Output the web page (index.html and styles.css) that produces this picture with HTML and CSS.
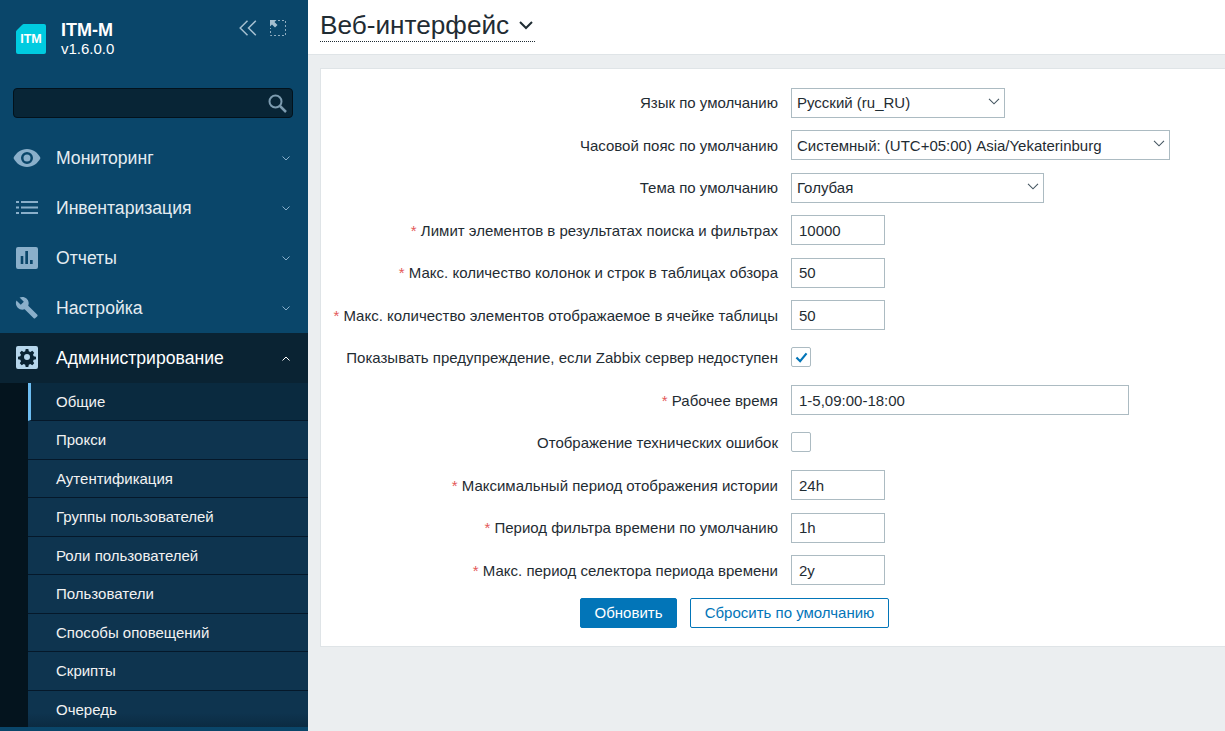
FILE: index.html
```html
<!DOCTYPE html>
<html lang="ru">
<head>
    <meta charset="UTF-8">
    <meta name="viewport" content="width=device-width, initial-scale=1.0">
    <title>Веб-интерфейс</title>
    <link rel="stylesheet" href="styles.css">
</head>
<body>
    <aside class="sidebar">
        <div class="brand">
            <div class="logo">ITM</div>
            <div class="brand-text">
                <div class="brand-name">ITM-M</div>
                <div class="brand-version">v1.6.0.0</div>
            </div>
            <div class="brand-tools">
                <svg width="18" height="16" viewBox="0 0 18 16" fill="none" stroke="#a5bfd0" stroke-width="1.5"><path d="M8.500 .8 1.200 8l7.300 7.200M16.800 .8 9.500 8l7.300 7.200"/></svg>
                <svg width="16" height="16" viewBox="0 0 16 16" fill="none"><path d="M8 .5h7.500v15H.5V8" stroke="#8fadc0" stroke-dasharray="2 2"/><path d="M0 0h6.500L4.500 2l3 3-2.500 2.500-3-3L0 6.500z" fill="#a5bfd0"/></svg>
            </div>
        </div>
        <div class="search">
            <input type="text" class="search-input">
            <svg class="search-icon" width="19" height="19" viewBox="0 0 19 19" fill="none" stroke="#7d9cb0" stroke-width="2"><circle cx="7.500" cy="7.500" r="6"/><path d="m12 12 6 6" stroke-width="2.500"/></svg>
        </div>
        <nav class="menu">
            <a class="menu-item">
                <svg class="menu-icon" viewBox="0 0 28 24"><path fill-rule="evenodd" d="M14 3C8 3 3 6.800 .5 12 3 17.200 8 21 14 21s11-3.800 13.500-9C25 6.800 20 3 14 3zm0 15a6 6 0 1 1 0-12 6 6 0 0 1 0 12zm0-9.500a3.500 3.500 0 1 0 0 7 3.500 3.500 0 0 0 0-7z"/></svg>
                <span>Мониторинг</span>
                <svg class="menu-arrow" viewBox="0 0 8 5"><path d="M.5.500 4 4 7.500.500"/></svg>
            </a>
            <a class="menu-item">
                <svg class="menu-icon" viewBox="0 0 28 24"><path d="M3 5h3v2H3zM3 10.500h3v2H3zM3 16h3v2H3zM8 5h17v2H8zM8 10.500h17v2H8zM8 16h17v2H8z"/></svg>
                <span>Инвентаризация</span>
                <svg class="menu-arrow" viewBox="0 0 8 5"><path d="M.5.500 4 4 7.500.500"/></svg>
            </a>
            <a class="menu-item">
                <svg class="menu-icon" viewBox="0 0 28 24"><path fill-rule="evenodd" d="M5 1h18a2 2 0 0 1 2 2v18a2 2 0 0 1-2 2H5a2 2 0 0 1-2-2V3a2 2 0 0 1 2-2zm2.700 9v8h2.600v-8zm4.600-5v13H15V5zm4.700 9v4h2.700v-4z"/></svg>
                <span>Отчеты</span>
                <svg class="menu-arrow" viewBox="0 0 8 5"><path d="M.5.500 4 4 7.500.500"/></svg>
            </a>
            <a class="menu-item">
                <svg class="menu-icon" viewBox="0 0 28 24"><path d="M23.200 19.300 13.300 9.400c1-2.500.5-5.400-1.600-7.500C9.600-.2 6.400-.6 3.900.5l4.600 4.600-3.300 3.300L.5 3.900c-1.200 2.500-.7 5.700 1.400 7.800 2.100 2.100 5 2.600 7.500 1.600l9.900 9.900c.4.400 1.100.4 1.500 0l2.400-2.400c.4-.4.400-1.100 0-1.500z" transform="translate(3 1) scale(.92)"/></svg>
                <span>Настройка</span>
                <svg class="menu-arrow" viewBox="0 0 8 5"><path d="M.5.500 4 4 7.500.500"/></svg>
            </a>
            <a class="menu-item menu-item-open">
                <svg class="menu-icon" viewBox="0 0 28 24"><path fill-rule="evenodd" d="M5 0h18a2 2 0 0 1 2 2v19a2 2 0 0 1-2 2H5a2 2 0 0 1-2-2V2a2 2 0 0 1 2-2zm7.700 3-.5 2.300-1.500.7-2-1.200-1.900 1.900 1.200 2-.7 1.500-2.300.5v2.600l2.300.5.7 1.500-1.200 2 1.900 1.900 2-1.200 1.500.7.500 2.300h2.600l.5-2.300 1.500-.7 2 1.200 1.900-1.900-1.200-2 .7-1.500 2.300-.5v-2.600l-2.300-.5-.7-1.500 1.200-2-1.900-1.900-2 1.200-1.500-.7-.5-2.300zM14 8a3 3 0 1 1 0 6 3 3 0 0 1 0-6z"/></svg>
                <span>Администрирование</span>
                <svg class="menu-arrow" viewBox="0 0 8 5"><path d="M.5 4.500 4 1l3.500 3.500"/></svg>
            </a>
            <div class="submenu">
                <a class="submenu-item active">Общие</a>
                <a class="submenu-item">Прокси</a>
                <a class="submenu-item">Аутентификация</a>
                <a class="submenu-item">Группы пользователей</a>
                <a class="submenu-item">Роли пользователей</a>
                <a class="submenu-item">Пользователи</a>
                <a class="submenu-item">Способы оповещений</a>
                <a class="submenu-item">Скрипты</a>
                <a class="submenu-item">Очередь</a>
            </div>
        </nav>
    </aside>

    <main class="content">
        <header class="page-header">
            <h1 class="page-title">Веб-интерфейс
                <svg width="14" height="9" viewBox="0 0 14 9" fill="none" stroke="#1f2c33" stroke-width="2"><path d="m1 1 6 6 6-6"/></svg>
            </h1>
        </header>
        <div class="card">
            <form class="settings-form">
                <label>Язык по умолчанию</label>
                <select class="field w-214"><option>Русский (ru_RU)</option></select>

                <label>Часовой пояс по умолчанию</label>
                <select class="field w-379"><option>Системный: (UTC+05:00) Asia/Yekaterinburg</option></select>

                <label>Тема по умолчанию</label>
                <select class="field w-253"><option>Голубая</option></select>

                <label><i>*</i> Лимит элементов в результатах поиска и фильтрах</label>
                <input class="field w-94" type="text" value="10000">

                <label><i>*</i> Макс. количество колонок и строк в таблицах обзора</label>
                <input class="field w-94" type="text" value="50">

                <label><i>*</i> Макс. количество элементов отображаемое в ячейке таблицы</label>
                <input class="field w-94" type="text" value="50">

                <label>Показывать предупреждение, если Zabbix сервер недоступен</label>
                <span class="check">
                    <svg width="13" height="11" viewBox="0 0 14 12" fill="none" stroke="#0275b8" stroke-width="2.400"><path d="m1.500 6 4 4 7-8.500"/></svg>
                </span>

                <label><i>*</i> Рабочее время</label>
                <input class="field w-338" type="text" value="1-5,09:00-18:00">

                <label>Отображение технических ошибок</label>
                <span class="check"></span>

                <label><i>*</i> Максимальный период отображения истории</label>
                <input class="field w-94" type="text" value="24h">

                <label><i>*</i> Период фильтра времени по умолчанию</label>
                <input class="field w-94" type="text" value="1h">

                <label><i>*</i> Макс. период селектора периода времени</label>
                <input class="field w-94" type="text" value="2y">

                <div class="form-buttons">
                    <button type="button" class="btn-main">Обновить</button>
                    <button type="button" class="btn-alt">Сбросить по умолчанию</button>
                </div>
            </form>
        </div>
    </main>
</body>
</html>
```

FILE: styles.css
```css
* {
    box-sizing: border-box;
}
html, body {
    height: 100%;
}
body {
    font-family: "Liberation Sans", Arial, sans-serif;
    font-size: 15px;
    color: #1f2c33;
    background-color: #ebeef0;
    display: flex;
    margin: 0;
    overflow: hidden;
}

/* sidebar */
.sidebar {
    width: 308px;
    height: 731px;
    flex-shrink: 0;
    background-color: #0a466a;
    color: #f2f2f2;
    overflow: hidden;
}
.brand {
    display: flex;
    height: 88px;
    padding: 20px 22px 0 16px;
}
.logo {
    width: 30px;
    height: 30px;
    margin-top: 4px;
    background-color: #00cbe0;
    border-radius: 8px 2px 2px 2px;
    clip-path: polygon(7px 0, 100% 0, 100% 100%, 0 100%, 0 7px);
    color: #fff;
    font-size: 12.500px;
    font-weight: bold;
    line-height: 31px;
    text-align: center;
}
.brand-text {
    margin-left: 15px;
    color: #fff;
}
.brand-name {
    font-size: 18px;
    font-weight: bold;
    line-height: 20px;
}
.brand-version {
    font-size: 15px;
    line-height: 18px;
}
.brand-tools {
    margin-left: auto;
    display: flex;
    gap: 13px;
}
.search {
    position: relative;
    margin: 0 15px 0 13px;
}
.search-input {
    display: block;
    width: 100%;
    height: 30px;
    background-color: #082536;
    border: 1px solid #02121c;
    border-radius: 4px;
}
.search-icon {
    position: absolute;
    top: 6px;
    right: 6px;
}
.menu {
    margin-top: 15px;
}
.menu-item {
    display: flex;
    align-items: center;
    height: 50px;
    padding: 0 18px 0 13px;
    font-size: 17.600px;
    color: #e4ecf1;
}
.menu-item span {
    margin-left: 15px;
}
.menu-icon {
    width: 28px;
    height: 24px;
    flex-shrink: 0;
    fill: #8aafca;
}
.menu-arrow {
    width: 8px;
    height: 5px;
    margin-left: auto;
    fill: none;
    stroke: #8aafca;
    stroke-width: 1;
}
.menu-item-open {
    background-color: #0a2333;
    color: #fff;
}
.menu-item-open .menu-icon {
    fill: #b6d6ec;
}
.menu-item-open .menu-arrow {
    stroke: #fff;
}
.submenu {
    height: 344px;
    border-left: 28px solid #04141e;
    background: linear-gradient(#0e344f calc(100% - 14px), #0b2b42);
}
.submenu-item {
    display: flex;
    align-items: center;
    height: 38.500px;
    padding-left: 28px;
    padding-bottom: .6px;
    border-bottom: 1px solid #05182a;
    color: #f2f2f2;
}
.submenu-item:first-child {
    height: 38.300px;
}
.submenu-item:last-child {
    border-bottom: none;
}
.submenu-item.active {
    padding-left: 25px;
    background-color: #0a2a3f;
    border-left: 3px solid #6dbdf2;
}

/* main area */
.content {
    flex: 1;
    min-width: 0;
}
.page-header {
    height: 55px;
    padding: 10px 12px 0;
    background-color: #fff;
    border-bottom: 1px solid #dfe4e7;
}
.page-title {
    display: inline-flex;
    align-items: center;
    gap: 10px;
    margin: 0;
    height: 32px;
    padding-right: 2px;
    font-size: 26.200px;
    font-weight: normal;
    border-bottom: 1px dotted #1f2c33;
}
.card {
    margin: 13px 0 0 12px;
    height: 579px;
    padding: 18.900px 0 0;
    background-color: #fff;
    border: 1px solid #dfe4e7;
    border-right: none;
}
.settings-form {
    display: grid;
    grid-template-columns: 457px 1fr;
    grid-auto-rows: 30px;
    column-gap: 13px;
    row-gap: 12.500px;
    align-items: center;
}
.settings-form label {
    text-align: right;
}
.settings-form i {
    color: #e45959;
    font-style: normal;
}
.field {
    display: block;
    height: 30px;
    padding: 0 7px;
    background-color: #fff;
    border: 1px solid #acbbc2;
    border-radius: 0;
    color: #1f2c33;
    font-family: inherit;
    font-size: 15px;
}
select.field {
    padding: 0 5px;
    appearance: none;
    background-image: url("data:image/svg+xml,%3Csvg xmlns='http://www.w3.org/2000/svg' width='12' height='7' viewBox='0 0 12 7' fill='none' stroke='%23445560' stroke-width='1.100'%3E%3Cpath d='m1 .8 5 5 5-5'/%3E%3C/svg%3E");
    background-repeat: no-repeat;
    background-position: right 4px top 9px;
}
.w-94 {
    width: 94px;
}
.w-214 {
    width: 214px;
}
.w-253 {
    width: 253px;
}
.w-338 {
    width: 338px;
}
.w-379 {
    width: 379px;
}
.check {
    display: flex;
    align-items: center;
    justify-content: center;
    width: 20px;
    height: 20px;
    margin-bottom: 1px;
    background-color: #fff;
    border: 1px solid #acbbc2;
    border-radius: 2px;
}
.form-buttons {
    grid-column: 1 / -1;
    display: flex;
    gap: 13px;
    margin-left: 259px;
}
.form-buttons button {
    height: 30px;
    border-radius: 2px;
    font-family: inherit;
    font-size: 15px;
    cursor: pointer;
}
.btn-main {
    width: 97px;
    background-color: #0275b8;
    border: 1px solid #0275b8;
    color: #fff;
}
.btn-alt {
    width: 199px;
    background-color: #fff;
    border: 1px solid #0275b8;
    color: #0275b8;
}
```
